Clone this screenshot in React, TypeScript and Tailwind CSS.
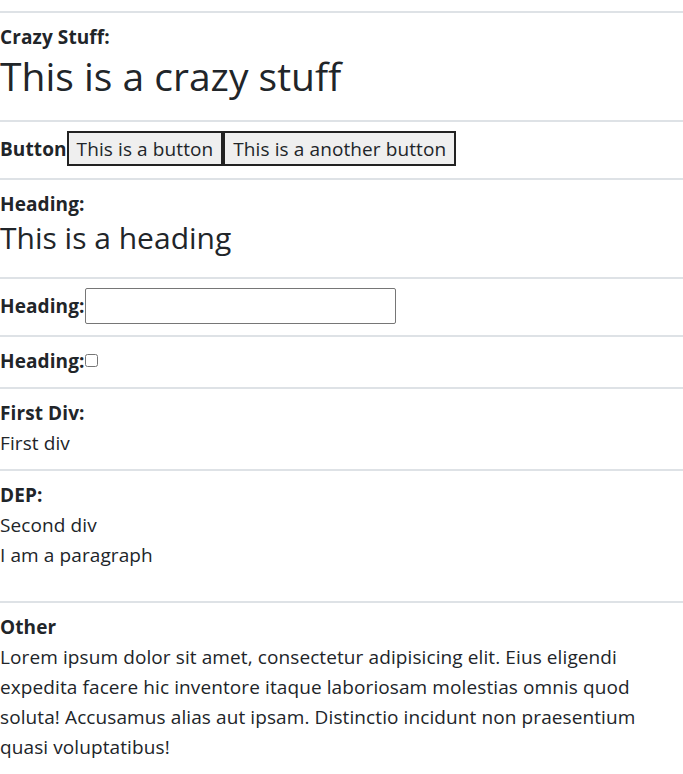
import React from "react";

const Section = ({ children, className }: { children: React.ReactNode; className?: string }) => (
  <div className={`border-t-2 border-[#dee2e6] pt-[9px] ${className ?? "pb-3"}`}>{children}</div>
);

export default function App() {
  return (
    <div className="font-['Open_Sans',sans-serif] text-[19px] leading-[30px] tracking-[0.1px] text-[#212529] bg-white min-h-screen pt-[11px]">
      <Section>
        <strong className="block">Crazy Stuff:</strong>
        <h1 className="text-[39px] leading-[48px] mb-2 font-medium tracking-normal">This is a crazy stuff</h1>
      </Section>

      <Section>
        <div className="flex items-center h-[35px]">
          <strong>Button</strong>
          <button className="h-[35px] px-[8px] bg-[#efefef] border-2 border-[#222] text-[19px]">This is a button</button>
          <button className="h-[35px] px-[8px] bg-[#efefef] border-2 border-[#222] text-[19px]">This is a another button</button>
        </div>
      </Section>

      <Section>
        <strong className="block">Heading:</strong>
        <h2 className="text-[30px] leading-[38px] mb-2 font-medium tracking-normal">This is a heading</h2>
      </Section>

      <Section>
        <div className="flex items-center h-[35px]">
          <strong>Heading:</strong>
          <input type="text" className="w-[311px] h-[36px] border border-[#767676] rounded-[2px]" />
        </div>
      </Section>

      <Section className="pb-[11px]">
        <div className="flex items-center h-[30px]">
          <strong>Heading:</strong>
          <input type="checkbox" className="w-[13px] h-[13px] -mt-[2px]" />
        </div>
      </Section>

      <Section className="pb-[11px]">
        <strong className="block">First Div:</strong>
        <div>First div</div>
      </Section>

      <Section>
        <strong className="block">DEP:</strong>
        <div>Second div</div>
        <p className="mb-[19px]">I am a paragraph</p>
      </Section>

      <Section>
        <strong className="block">Other</strong>
        <p>
          Lorem ipsum dolor sit amet, consectetur adipisicing elit. Eius eligendi expedita facere hic inventore itaque
          laboriosam molestias omnis quod soluta! Accusamus alias aut ipsam. Distinctio incidunt non praesentium quasi
          voluptatibus!
        </p>
      </Section>
    </div>
  );
}
